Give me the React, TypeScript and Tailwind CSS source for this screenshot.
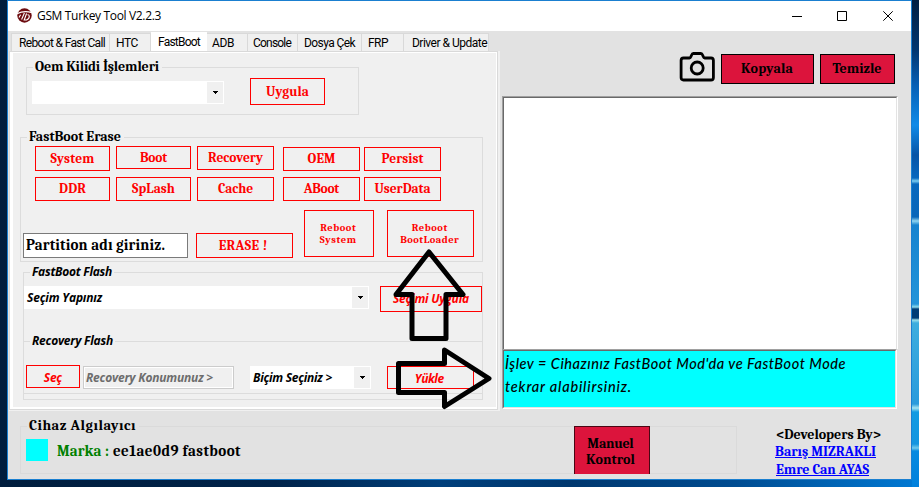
import React, { useLayoutEffect, useRef } from "react";

const serif = "font-['Cambria','Liberation_Serif',serif] font-bold";
const candara = "font-['Candara','Open_Sans',sans-serif] font-bold italic";
const ui = "font-['Roboto',sans-serif]";

/** Single line of text whose tracking is adjusted so that it spans `w` pixels. */
function Fit({ w, className = "", children }: { w: number; className?: string; children: string }) {
  const ref = useRef<HTMLSpanElement>(null);
  useLayoutEffect(() => {
    const el = ref.current;
    if (!el) return;
    const apply = () => {
      el.style.letterSpacing = "0px";
      const natural = el.getBoundingClientRect().width;
      const step = (w - natural) / children.length;
      el.style.letterSpacing = `${step}px`;
      el.style.marginRight = `${-step}px`;
    };
    apply();
    document.fonts?.ready.then(apply);
  }, [w, children]);
  return (
    <span ref={ref} className={`inline-block whitespace-pre ${className}`}>
      {children}
    </span>
  );
}

function Btn({ w, className, children, font = `${serif} text-[13.5px]` }: { w: number; className: string; children: string; font?: string }) {
  return (
    <button className={`flex shrink-0 items-center justify-center border border-[#ff0000] leading-none text-[#ff0000] ${font} ${className}`}>
      <Fit w={w}>{children}</Fit>
    </button>
  );
}

function Combo({ className, text, w = 0 }: { className: string; text?: string; w?: number }) {
  return (
    <div className={`flex shrink-0 items-center justify-between bg-white py-px pr-px pl-[3px] ${className}`}>
      <span className={`${candara} text-[12px] leading-none text-black`}>{text && <Fit w={w}>{text}</Fit>}</span>
      <span className="flex h-full w-4 items-center justify-center bg-[#f0f0f0] pl-px">
        <svg width="5" height="3" viewBox="0 0 5 3"><path d="M0 0h5v1H4v1H3v1H2V2H1V1H0z" /></svg>
      </span>
    </div>
  );
}

function Group({ className, legend, children }: { className: string; legend: React.ReactNode; children?: React.ReactNode }) {
  return (
    <section className={`border ${className}`}>
      {legend}
      {children}
    </section>
  );
}

const tabClass = `${ui} flex h-[18px] shrink-0 items-center border-t border-r border-[#d9d9d9] bg-[#f0f0f0] pt-px text-[12px] leading-none`;

export default function App() {
  return (
    <div className="relative h-[487px] w-[919px] overflow-hidden bg-[linear-gradient(90deg,#001d3d_0%,#00234a_30%,#003f7b_48%,#00376e_62%,#004c91_80%,#0079d4_100%)] pl-[7px] text-black">
      <div className="flex">
        <main className="flex h-[480px] w-[905px] shrink-0 flex-col border border-[#1a7fd0] bg-[#e2e2e2]">
          <header className="flex h-[30px] shrink-0 items-center bg-white pl-[9px]">
            <svg width="15" height="15" viewBox="0 0 15 15" className="mb-[2px] shrink-0">
              <circle cx="7.5" cy="7.5" r="7.2" fill="#6d0c10" />
              <path d="M0 5.600Q7 2.200 15 4.600" fill="none" stroke="#fff" strokeWidth="1.200" />
              <path d="M7.400 5L4.600 11.500M3.600 6.800L2 9.500M9.600 5.500L7.200 12H9.500Q12.500 11 12.300 8Q12 6.500 10.500 6.800" fill="none" stroke="#fff" strokeWidth="1.100" />
            </svg>
            <span className="ml-[5px] font-['Segoe_UI','Open_Sans',sans-serif] text-[12px] leading-none"><Fit w={124}>GSM Turkey Tool V2.2.3</Fit></span>
            <svg width="104" height="12" viewBox="0 0 104 12" className="mr-[17px] mb-px ml-auto" fill="none" stroke="#000" strokeWidth="1">
              <path d="M2 6.500h10M47.500 1.500h9v9h-9zM93.300 1.300l9.400 9.400M102.700 1.300l-9.400 9.400" />
            </svg>
          </header>

          <div className="flex h-[380px] shrink-0">
            <div className="w-[492px] shrink-0 pt-px">
              <nav className="flex items-end pl-[3px]">
                <div className={`${tabClass} w-[99px] border-l pl-[7px]`}><Fit w={86}>Reboot &amp; Fast Call</Fit></div>
                <div className={`${tabClass} w-[41px] pl-[6px]`}><Fit w={22}>HTC</Fit></div>
                <div className={`${ui} flex h-[19px] w-[56px] items-center bg-white pl-[7px] text-[12px] leading-none`}><Fit w={42}>FastBoot</Fit></div>
                <div className={`${tabClass} w-[41px] pl-[5px]`}><Fit w={22}>ADB</Fit></div>
                <div className={`${tabClass} w-[50px] pl-[5px]`}><Fit w={38}>Console</Fit></div>
                <div className={`${tabClass} w-[64px] pl-[6px]`}><Fit w={51}>Dosya Çek</Fit></div>
                <div className={`${tabClass} w-[42px] pl-[6px]`}><Fit w={20}>FRP</Fit></div>
                <div className={`${tabClass} w-[85px] pl-[8px]`}><Fit w={75}>Driver &amp; Update</Fit></div>
              </nav>
              <div className="ml-px h-[360px] w-[491px] bg-[#f0f0f0] pr-[2px] pb-px">
                <div className="h-full border border-[#d9d9d9] bg-white pt-px pr-px pb-[2px] pl-[3px]">
                  <div className="flex h-full flex-col bg-[#f0f0f0]">
                    <Group
                      className="mt-[14px] ml-[13px] h-[48px] w-[333px] shrink-0 border-[#dcdcdc]"
                      legend={<div className={`${serif} -mt-[10px] ml-[6px] flex h-[18px] w-[129px] items-center bg-[#f0f0f0] pl-[2px] text-[14px] leading-none`}><Fit w={124}>Oem Kilidi İşlemleri</Fit></div>}
                    >
                      <div className="mt-[2px] ml-[5px] flex items-start">
                        <Combo className="mt-[3px] h-[23px] w-[192px]" />
                        <Btn w={43} className="ml-[26px] h-[27px] w-[75px]">Uygula</Btn>
                      </div>
                    </Group>

                    <Group
                      className="mt-[22px] ml-[7px] h-[125px] w-[463px] shrink-0 border-[#dcdcdc]"
                      legend={<div className={`${serif} -mt-[10px] ml-[6px] flex h-[18px] w-[97px] items-center bg-[#f0f0f0] pl-[2px] text-[14px] leading-none`}><Fit w={92}>FastBoot Erase</Fit></div>}
                    >
                      <div className="ml-[14px] flex h-[25px] items-start">
                        <Btn w={44} className="h-[25px] w-[75px]">System</Btn>
                        <Btn w={27} className="ml-[6px] h-[23px] w-[75px]">Boot</Btn>
                        <Btn w={55} className="ml-[6px] h-[24px] w-[77px]">Recovery</Btn>
                        <Btn w={28} className="mt-px ml-[9px] h-[24px] w-[77px]">OEM</Btn>
                        <Btn w={42} className="mt-px ml-[4px] h-[24px] w-[77px]">Persist</Btn>
                      </div>
                      <div className="mt-[6px] ml-[14px] flex">
                        <Btn w={27} className="h-[24px] w-[75px]">DDR</Btn>
                        <Btn w={43} className="ml-[6px] h-[24px] w-[75px]">SpLash</Btn>
                        <Btn w={35} className="ml-[6px] h-[24px] w-[77px]">Cache</Btn>
                        <Btn w={35} className="ml-[9px] h-[24px] w-[77px]">ABoot</Btn>
                        <Btn w={56} className="ml-[4px] h-[24px] w-[77px]">UserData</Btn>
                      </div>
                      <div className="mt-[9px] ml-[2px] flex">
                        <div className={`${serif} mt-[23px] flex h-[25px] w-[165px] shrink-0 items-center border border-[#7a7a7a] bg-white pl-[2px] text-[15px] leading-none`}><Fit w={139}>Partition adı giriniz.</Fit></div>
                        <Btn w={49} className="mt-[23px] ml-[8px] h-[25px] w-[97px] pt-px pr-[3px]">ERASE !</Btn>
                        <button className={`${serif} ml-[11px] flex h-[47px] w-[70px] shrink-0 flex-col items-center justify-center border border-[#ff0000] pr-[2px] text-[10.500px] leading-[12px] text-[#ff0000]`}><Fit w={36}>Reboot</Fit><Fit w={37}>System</Fit></button>
                        <button className={`${serif} ml-[13px] flex h-[47px] w-[87px] shrink-0 flex-col items-center justify-center border border-[#ff0000] pr-[2px] text-[10.500px] leading-[12px] text-[#ff0000]`}><Fit w={36}>Reboot</Fit><Fit w={59}>BootLoader</Fit></button>
                      </div>
                    </Group>

                    <Group
                      className="mt-[10px] ml-[10px] h-[128px] w-[460px] shrink-0 border-[#dcdcdc]"
                      legend={<div className={`${candara} -mt-[10px] ml-[6px] flex h-[18px] w-[84px] items-center bg-[#f0f0f0] pl-[2px] text-[12px] leading-none`}><Fit w={80}>FastBoot Flash</Fit></div>}
                    >
                      <div className="mt-[5px] flex items-start">
                        <Combo className="h-[23px] w-[345px]" text="Seçim Yapınız" w={75} />
                        <Btn w={76} font={`${candara} text-[12px]`} className="ml-[11px] h-[26px] w-[102px]">Seçimi Uygula</Btn>
                      </div>
                      <Group
                        className="-mx-px mt-[29px] h-[53px] border-[#dcdcdc]"
                        legend={<div className={`${candara} -mt-[10px] ml-[6px] flex h-[18px] w-[85px] items-center bg-[#f0f0f0] pl-[2px] text-[12px] leading-none`}><Fit w={81}>Recovery Flash</Fit></div>}
                      >
                        <div className="mt-[15px] ml-[2px] flex items-start">
                          <Btn w={18} font={`${candara} text-[12px]`} className="h-[23px] w-[54px] pt-[3px]">Seç</Btn>
                          <div className={`${candara} mt-px ml-[3px] flex h-[23px] w-[151px] shrink-0 items-center border border-[#cccccc] bg-[#f0f0f0] pl-[2px] text-[12px] leading-none text-[#6d6d6d] shadow-[inset_0_0_0_1px_white]`}><Fit w={127}>{"Recovery Konumunuz >"}</Fit></div>
                          <Combo className="mt-px ml-[16px] h-[23px] w-[121px]" text="Biçim Seçiniz >" w={79} />
                          <Btn w={29} font={`${candara} text-[12px]`} className="mt-px ml-[16px] h-[23px] w-[87px] pt-[3px] pr-[2px]">Yükle</Btn>
                        </div>
                      </Group>
                    </Group>
                  </div>
                </div>
              </div>
            </div>

            <div className="flex flex-1 flex-col pt-[21px] pl-[2px]">
              <div className="flex h-[32px] items-start pl-[177px]">
                <svg width="36" height="30" viewBox="0 0 36 30" fill="none" stroke="#000" strokeWidth="2.800" className="shrink-0">
                  <path d="M4.500 6h6c1 0 1.200-.8 1.600-1.800.7-1.700 1-2.700 2.200-2.700h7.600c1.200 0 1.500 1 2.200 2.700.4 1 .6 1.800 1.600 1.800H32c1.600 0 2.400.8 2.400 2.400v17c0 1.800-.8 2.600-2.400 2.600H4.500c-1.600 0-2.400-.8-2.400-2.600v-17C2.100 6.800 2.900 6 4.500 6z" />
                  <circle cx="18.200" cy="16" r="6" />
                </svg>
                <button className={`${serif} mt-[2px] ml-[6px] flex h-[30px] w-[93px] items-center justify-center border border-black bg-[#dc143c] pr-px text-[14px] leading-none`}><Fit w={52}>Kopyala</Fit></button>
                <button className={`${serif} mt-[2px] ml-[6px] flex h-[30px] w-[75px] items-center justify-center border border-black bg-[#dc143c] pr-px text-[14px] leading-none`}><Fit w={49}>Temizle</Fit></button>
              </div>
              <div className="mt-[12px] h-[253px] w-[396px] shrink-0 border-t border-r border-l border-t-[#a0a0a0] border-r-white border-l-[#a0a0a0]">
                <div className="h-full border-t border-r border-l border-t-[#696969] border-r-[#e3e3e3] border-l-[#696969] bg-white" />
              </div>
              <div className="h-[60px] w-[395px] shrink-0 border border-white border-t-[#a0a0a0] border-l-[#a0a0a0]">
                <div className="flex h-full flex-col border border-[#e3e3e3] border-t-[#696969] border-l-[#696969] bg-[#00ffff] pt-px pl-px font-['Segoe_Print','Lato',sans-serif] text-[14.500px] leading-[23px] font-medium italic">
                  <Fit className="self-start" w={341}>İşlev = Cihazınız FastBoot Mod'da ve FastBoot Mode</Fit>
                  <Fit className="self-start" w={127}>tekrar alabilirsiniz.</Fit>
                </div>
              </div>
            </div>
          </div>

          <footer className="flex flex-1 items-start pt-[15px] pl-[12px]">
            <Group
              className="h-[48px] w-[717px] shrink-0 border-[#dadada]"
              legend={<div className={`${serif} -mt-[10px] ml-[6px] flex h-[18px] w-[112px] items-center bg-[#e2e2e2] pl-[2px] text-[14.500px] leading-none`}><Fit w={107}>Cihaz Algılayıcı</Fit></div>}
            >
              <div className="flex">
                <div className="mt-[4px] ml-[5px] size-[22px] bg-[#00ffff]" />
                <div className={`${serif} mt-[8px] ml-[9px] flex w-[517px] gap-[4px] text-[15px] leading-[16px]`}>
                  <Fit className="text-[#008000]" w={52}>Marka :</Fit>
                  <Fit w={128}>ee1ae0d9 fastboot</Fit>
                </div>
                <button className={`${serif} -mt-[9px] flex h-[48px] w-[76px] shrink-0 flex-col items-center justify-center border border-b-0 border-[#4a0714] bg-[#dc143c] pt-[2px] pr-[3px] text-[14px] leading-[16px]`}>
                  <Fit w={46}>Manuel</Fit>
                  <Fit w={49}>Kontrol</Fit>
                </button>
              </div>
            </Group>
            <div className={`${serif} ml-[38px] flex flex-col items-start text-[14px] leading-[17px]`}>
              <Fit className="ml-px" w={105}>{"<Developers By>"}</Fit>
              <Fit className="text-[#0000ff] underline" w={101}>Barış MIZRAKLI</Fit>
              <Fit className="mt-px ml-px text-[#0000ff] underline" w={93}>Emre Can AYAS</Fit>
            </div>
          </footer>
        </main>
        <div className="h-[487px] w-[7px] bg-[linear-gradient(180deg,#011f42_0px,#02366f_50px,#075fb4_85px,#108be8_125px,#0754a6_155px,#0867be_178px,#7ccdf0_181px,#0968bd_184px,#0a66b9_217px,#90d5f0_221px,#1683cf_225px,#2494d9_304px,#8edbed_307px,#003c75_309px,#003c75_318px,#9bdee9_320px,#3dadde_323px,#2a9bdc_404px,#a5e3f0_408px,#129be2_412px,#1495e0_444px,#71c9ec_448px,#078ae0_451px,#0080dc_487px)]" />
      </div>

      <svg className="absolute inset-0" width="919" height="487" viewBox="0 0 919 487" fill="none" stroke="#000" strokeWidth="5" strokeLinejoin="round">
        <path d="M429 252L463 294.500H446V338.500H412V294.500H396Z" />
        <path d="M398.500 363.500H444.500V350L489 378.500L444.500 406.500V392.500H398.500Z" />
      </svg>
    </div>
  );
}
